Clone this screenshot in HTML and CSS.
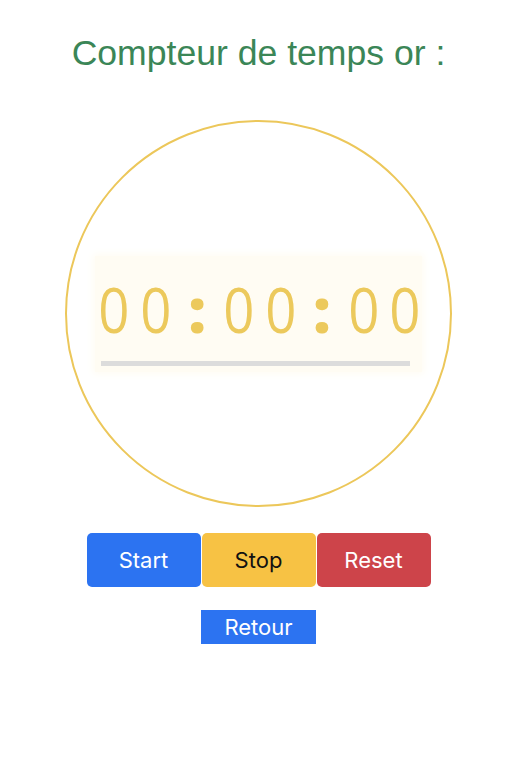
FILE: index.html
```html
<!DOCTYPE html>
<html lang="fr">
<head>
<meta charset="utf-8">
<title>Compteur de temps</title>
<link rel="stylesheet" href="styles.css">
</head>
<body>
<main class="page">
  <h1 class="title">Compteur de temps or :</h1>
  <div class="circle">
    <div class="timer">
      <div class="digits">
        <span class="ch num">0</span><span class="ch num">0</span><span class="ch sep">:</span><span class="ch num">0</span><span class="ch num">0</span><span class="ch sep">:</span><span class="ch num">0</span><span class="ch num">0</span>
      </div>
      <div class="bar"></div>
    </div>
  </div>
  <div class="controls">
    <button class="btn btn-start">Start</button>
    <button class="btn btn-stop">Stop</button>
    <button class="btn btn-reset">Reset</button>
  </div>
  <button class="back">Retour</button>
</main>
</body>
</html>
```

FILE: styles.css
```css
html, body {
  margin: 0;
  padding: 0;
  background: #ffffff;
}

.page {
  width: 517px;
  display: flex;
  flex-direction: column;
  align-items: center;
  padding-top: 33px;
}

.title {
  margin: 0;
  font-family: "Liberation Sans", Arial, sans-serif;
  font-weight: 400;
  font-size: 35.6px;
  line-height: 41px;
  color: #3b8657;
}

.circle {
  margin-top: 46px;
  width: 383px;
  height: 383px;
  border: 2.5px solid #ecc75a;
  border-radius: 50%;
  display: flex;
  align-items: center;
  justify-content: center;
}

.timer {
  width: 327px;
  height: 116px;
  box-sizing: border-box;
  padding: 18px 12px 0 6px;
  background: #fffcf3;
  box-shadow: 0 0 8px 2px #fffcf2;
  display: flex;
  flex-direction: column;
}

.digits {
  display: flex;
  margin-left: -7.8px;
  font-family: "Open Sans", "Noto Sans", sans-serif;
  font-size: 62px;
  line-height: 70px;
  color: #ecc95c;
  white-space: nowrap;
}

.ch {
  width: 41.6px;
  display: flex;
  justify-content: center;
  flex: none;
}

.num {
  font-weight: 500;
  transform: scaleX(0.88);
}

.sep {
  font-weight: 800;
}

.bar {
  margin-top: 17px;
  width: 309px;
  height: 5px;
  background: #dcdcdc;
}

.controls {
  margin-top: 26px;
  display: flex;
  gap: 1px;
}

.btn {
  width: 114px;
  height: 54px;
  border: none;
  border-radius: 5px;
  font-family: Inter, "Noto Sans", sans-serif;
  font-size: 22px;
  color: #ffffff;
  padding: 0 0 0 0;
}

.btn-start { background: #2c73f1; }
.btn-stop { background: #f7c244; color: #111111; }
.btn-reset { background: #cd444a; }

.back {
  margin-top: 23px;
  width: 115px;
  height: 34px;
  border: none;
  border-radius: 0;
  background: #2c73f1;
  color: #ffffff;
  font-family: Inter, "Noto Sans", sans-serif;
  font-size: 22px;
  padding: 0;
}
```
